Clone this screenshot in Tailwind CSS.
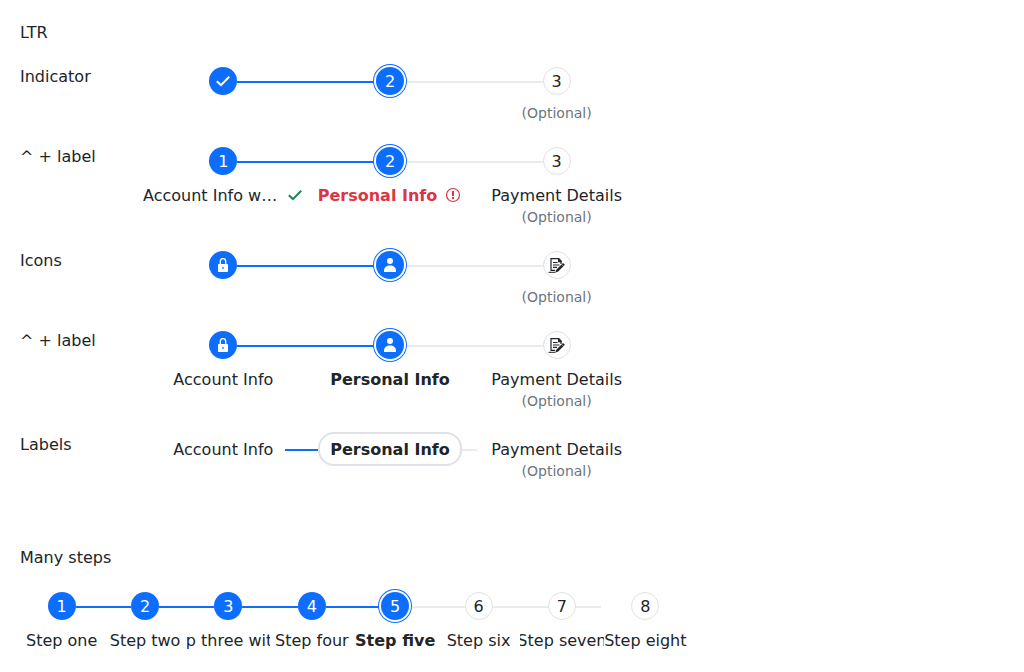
<!DOCTYPE html>
<html lang="en">
<head>
<meta charset="utf-8">
<meta name="viewport" content="width=device-width, initial-scale=1">
<title>Steps</title>
<script src="https://cdn.jsdelivr.net/npm/@tailwindcss/browser@4"></script>
</head>
<body class="bg-white p-5 font-['DejaVu_Sans',sans-serif] text-base leading-[25px] text-[#212529]">

<svg class="hidden" aria-hidden="true">
  <symbol id="check" viewBox="0 0 16 16"><path d="M1.800 8.200 6 12.100 14.200 3.700" fill="none" stroke="currentColor" stroke-width="2"/></symbol>
  <symbol id="alert" viewBox="0 0 16 16"><circle cx="8" cy="8" r="6.500" fill="none" stroke="currentColor" stroke-width="1.200"/><path d="M7 4h2v5H7zM7 10h2v2H7z"/></symbol>
  <symbol id="lock" viewBox="0 0 16 16"><path d="M5.300 7V4.400a2.700 2.700 0 0 1 5.400 0V7" fill="none" stroke="currentColor" stroke-width="1.300"/><path fill-rule="evenodd" d="M3.800 7h8.400a.8.8 0 0 1 .8.800v6.400a.8.8 0 0 1-.8.800H3.800a.8.8 0 0 1-.8-.800V7.800a.8.8 0 0 1 .8-.8zm3.600 2.700v2.200h1.200V9.700z"/></symbol>
  <symbol id="person" viewBox="0 0 16 16"><circle cx="8" cy="4" r="3"/><path d="M2 15v-1.500C2 10.500 4.500 8.500 8 8.500s6 2 6 5V15z"/></symbol>
  <symbol id="form" viewBox="0 0 18 16"><path d="M3 13.300V1.600h7.500l2.500 2.700V7M2.400 13.300h4.800" fill="none" stroke="currentColor" stroke-width="1.200"/><path d="M10 1h1l2.700 3v1.300H10z"/><path d="M5 5.500h4.500M5 8h6.500M5 10.400h4" fill="none" stroke="currentColor" stroke-width="1.200"/><path d="M.500 15.300h7" fill="none" stroke="currentColor" stroke-width="1"/><path d="m15 6 1.900 1.800-6.700 6.700-2.800.9.900-2.700z"/><path d="m13.400 7.200 2.300 2.300" stroke="#fff" stroke-width=".5"/></symbol>
</svg>

<main>
  <h1>LTR</h1>

  <section class="mt-[19px] flex">
    <h2 class="w-30 shrink-0">Indicator</h2>
    <ol class="grid w-full max-w-[500px] grid-cols-3">
      <li>
        <div class="flex h-[34px] items-center">
          <span class="mt-0.5 h-0.5 flex-1"></span>
          <span class="grid size-7 place-items-center rounded-full bg-[#0d6efd] text-white"><svg class="size-4" fill="currentColor" role="img" aria-label="Done"><use href="#check"/></svg></span>
          <span class="mt-0.5 h-0.5 flex-1 bg-[#0d6efd]"></span>
        </div>
      </li>
      <li aria-current="step">
        <div class="flex h-[34px] items-center">
          <span class="mt-0.5 h-0.5 flex-1 bg-[#0d6efd]"></span>
          <span class="z-10 grid size-7 place-items-center rounded-full bg-[#0d6efd] pt-0.5 leading-6 text-white shadow-[0_0_0_2px_#fff,0_0_0_3px_#0d6efd]">2</span>
          <span class="mt-0.5 h-0.5 flex-1 bg-[#e9ecef]"></span>
        </div>
      </li>
      <li>
        <div class="flex h-[34px] items-center">
          <span class="mt-0.5 h-0.5 flex-1 bg-[#e9ecef]"></span>
          <span class="grid size-7 place-items-center rounded-full border border-[#dee2e6] pt-0.5 leading-6">3</span>
          <span class="mt-0.5 h-0.5 flex-1"></span>
        </div>
        <p class="mt-[5px] text-center text-sm leading-[21px] text-[#6c757d]">(Optional)</p>
      </li>
    </ol>
  </section>

  <section class="mt-5 flex">
    <h2 class="w-30 shrink-0">^ + label</h2>
    <ol class="grid w-full max-w-[500px] grid-cols-3">
      <li class="min-w-0">
        <div class="flex h-[34px] items-center">
          <span class="mt-0.5 h-0.5 flex-1"></span>
          <span class="grid size-7 place-items-center rounded-full bg-[#0d6efd] pt-0.5 leading-6 text-white">1</span>
          <span class="mt-0.5 h-0.5 flex-1 bg-[#0d6efd]"></span>
        </div>
        <div class="mt-[5px] flex items-center justify-center gap-2 pr-1 pl-[3px]">
          <span class="truncate">Account Info with long label</span>
          <svg class="mb-px size-4 shrink-0 text-[#198754]" fill="currentColor" role="img" aria-label="Valid"><use href="#check"/></svg>
        </div>
      </li>
      <li class="min-w-0" aria-current="step">
        <div class="flex h-[34px] items-center">
          <span class="mt-0.5 h-0.5 flex-1 bg-[#0d6efd]"></span>
          <span class="z-10 grid size-7 place-items-center rounded-full bg-[#0d6efd] pt-0.5 leading-6 text-white shadow-[0_0_0_2px_#fff,0_0_0_3px_#0d6efd]">2</span>
          <span class="mt-0.5 h-0.5 flex-1 bg-[#e9ecef]"></span>
        </div>
        <div class="mt-[5px] flex items-center justify-center gap-2 pr-1 pl-[3px] font-bold text-[#dc3545]">
          <span class="truncate">Personal Info</span>
          <svg class="mb-px size-4 shrink-0" fill="currentColor" role="img" aria-label="Error"><use href="#alert"/></svg>
        </div>
      </li>
      <li class="min-w-0">
        <div class="flex h-[34px] items-center">
          <span class="mt-0.5 h-0.5 flex-1 bg-[#e9ecef]"></span>
          <span class="grid size-7 place-items-center rounded-full border border-[#dee2e6] pt-0.5 leading-6">3</span>
          <span class="mt-0.5 h-0.5 flex-1"></span>
        </div>
        <div class="mt-[5px] truncate text-center">Payment Details</div>
        <p class="-mt-px text-center text-sm leading-[21px] text-[#6c757d]">(Optional)</p>
      </li>
    </ol>
  </section>

  <section class="mt-5 flex">
    <h2 class="w-30 shrink-0">Icons</h2>
    <ol class="grid w-full max-w-[500px] grid-cols-3">
      <li>
        <div class="flex h-[34px] items-center">
          <span class="mt-0.5 h-0.5 flex-1"></span>
          <span class="grid size-7 place-items-center rounded-full bg-[#0d6efd] text-white"><svg class="size-4" fill="currentColor" role="img" aria-label="Account Info"><use href="#lock"/></svg></span>
          <span class="mt-0.5 h-0.5 flex-1 bg-[#0d6efd]"></span>
        </div>
      </li>
      <li aria-current="step">
        <div class="flex h-[34px] items-center">
          <span class="mt-0.5 h-0.5 flex-1 bg-[#0d6efd]"></span>
          <span class="z-10 grid size-7 place-items-center rounded-full bg-[#0d6efd] text-white shadow-[0_0_0_2px_#fff,0_0_0_3px_#0d6efd]"><svg class="size-4" fill="currentColor" role="img" aria-label="Personal Info"><use href="#person"/></svg></span>
          <span class="mt-0.5 h-0.5 flex-1 bg-[#e9ecef]"></span>
        </div>
      </li>
      <li>
        <div class="flex h-[34px] items-center">
          <span class="mt-0.5 h-0.5 flex-1 bg-[#e9ecef]"></span>
          <span class="grid size-7 place-items-center rounded-full border border-[#dee2e6]"><svg class="h-4 w-[18px]" fill="currentColor" role="img" aria-label="Payment Details"><use href="#form"/></svg></span>
          <span class="mt-0.5 h-0.5 flex-1"></span>
        </div>
        <p class="mt-[5px] text-center text-sm leading-[21px] text-[#6c757d]">(Optional)</p>
      </li>
    </ol>
  </section>

  <section class="mt-5 flex">
    <h2 class="w-30 shrink-0">^ + label</h2>
    <ol class="grid w-full max-w-[500px] grid-cols-3">
      <li class="min-w-0">
        <div class="flex h-[34px] items-center">
          <span class="mt-0.5 h-0.5 flex-1"></span>
          <span class="grid size-7 place-items-center rounded-full bg-[#0d6efd] text-white"><svg class="size-4" fill="currentColor" aria-hidden="true"><use href="#lock"/></svg></span>
          <span class="mt-0.5 h-0.5 flex-1 bg-[#0d6efd]"></span>
        </div>
        <div class="mt-[5px] truncate text-center">Account Info</div>
      </li>
      <li class="min-w-0" aria-current="step">
        <div class="flex h-[34px] items-center">
          <span class="mt-0.5 h-0.5 flex-1 bg-[#0d6efd]"></span>
          <span class="z-10 grid size-7 place-items-center rounded-full bg-[#0d6efd] text-white shadow-[0_0_0_2px_#fff,0_0_0_3px_#0d6efd]"><svg class="size-4" fill="currentColor" aria-hidden="true"><use href="#person"/></svg></span>
          <span class="mt-0.5 h-0.5 flex-1 bg-[#e9ecef]"></span>
        </div>
        <div class="mt-[5px] truncate text-center font-bold">Personal Info</div>
      </li>
      <li class="min-w-0">
        <div class="flex h-[34px] items-center">
          <span class="mt-0.5 h-0.5 flex-1 bg-[#e9ecef]"></span>
          <span class="grid size-7 place-items-center rounded-full border border-[#dee2e6]"><svg class="h-4 w-[18px]" fill="currentColor" aria-hidden="true"><use href="#form"/></svg></span>
          <span class="mt-0.5 h-0.5 flex-1"></span>
        </div>
        <div class="mt-[5px] truncate text-center">Payment Details</div>
        <p class="-mt-px text-center text-sm leading-[21px] text-[#6c757d]">(Optional)</p>
      </li>
    </ol>
  </section>

  <section class="mt-5 flex">
    <h2 class="w-30 shrink-0">Labels</h2>
    <ol class="grid w-full max-w-[500px] grid-cols-3">
      <li class="min-w-0">
        <div class="flex h-[34px] items-center">
          <span class="mt-0.5 h-0.5 flex-1"></span>
          <span class="px-3 pt-px">Account Info</span>
          <span class="mt-0.5 h-0.5 flex-1 bg-[#0d6efd]"></span>
        </div>
      </li>
      <li class="min-w-0" aria-current="step">
        <div class="flex h-[34px] items-center">
          <span class="mt-0.5 h-0.5 flex-1 bg-[#0d6efd]"></span>
          <span class="rounded-2xl border-2 border-[#dee2e6] px-2.5 pt-[3px] pb-0.5 font-bold">Personal Info</span>
          <span class="mt-0.5 h-0.5 flex-1 bg-[#e9ecef]"></span>
        </div>
      </li>
      <li class="min-w-0">
        <div class="flex h-[34px] items-center">
          <span class="mt-0.5 h-0.5 flex-1 bg-[#e9ecef]"></span>
          <span class="px-3.5 pt-px">Payment Details</span>
          <span class="mt-0.5 h-0.5 flex-1"></span>
        </div>
        <p class="-mt-[5px] text-center text-sm leading-[21px] text-[#6c757d]">(Optional)</p>
      </li>
    </ol>
  </section>

  <section class="mt-[63px]">
    <h2>Many steps</h2>
    <ol class="mt-[19px] grid w-full max-w-[667px] grid-cols-8">
      <li class="min-w-0">
        <div class="flex h-[34px] items-center">
          <span class="mt-0.5 h-0.5 flex-1"></span>
          <span class="grid size-7 place-items-center rounded-full bg-[#0d6efd] pt-0.5 leading-6 text-white">1</span>
          <span class="mt-0.5 h-0.5 flex-1 bg-[#0d6efd]"></span>
        </div>
        <div class="mt-[5px] flex justify-center overflow-hidden whitespace-nowrap">Step one</div>
      </li>
      <li class="min-w-0">
        <div class="flex h-[34px] items-center">
          <span class="mt-0.5 h-0.5 flex-1 bg-[#0d6efd]"></span>
          <span class="grid size-7 place-items-center rounded-full bg-[#0d6efd] pt-0.5 leading-6 text-white">2</span>
          <span class="mt-0.5 h-0.5 flex-1 bg-[#0d6efd]"></span>
        </div>
        <div class="mt-[5px] flex justify-center overflow-hidden whitespace-nowrap">Step two</div>
      </li>
      <li class="min-w-0">
        <div class="flex h-[34px] items-center">
          <span class="mt-0.5 h-0.5 flex-1 bg-[#0d6efd]"></span>
          <span class="grid size-7 place-items-center rounded-full bg-[#0d6efd] pt-0.5 leading-6 text-white">3</span>
          <span class="mt-0.5 h-0.5 flex-1 bg-[#0d6efd]"></span>
        </div>
        <div class="mt-[5px] flex justify-center overflow-hidden whitespace-nowrap">Step three with a</div>
      </li>
      <li class="min-w-0">
        <div class="flex h-[34px] items-center">
          <span class="mt-0.5 h-0.5 flex-1 bg-[#0d6efd]"></span>
          <span class="grid size-7 place-items-center rounded-full bg-[#0d6efd] pt-0.5 leading-6 text-white">4</span>
          <span class="mt-0.5 h-0.5 flex-1 bg-[#0d6efd]"></span>
        </div>
        <div class="mt-[5px] flex justify-center overflow-hidden whitespace-nowrap">Step four</div>
      </li>
      <li class="min-w-0" aria-current="step">
        <div class="flex h-[34px] items-center">
          <span class="mt-0.5 h-0.5 flex-1 bg-[#0d6efd]"></span>
          <span class="z-10 grid size-7 place-items-center rounded-full bg-[#0d6efd] pt-0.5 leading-6 text-white shadow-[0_0_0_2px_#fff,0_0_0_3px_#0d6efd]">5</span>
          <span class="mt-0.5 h-0.5 flex-1 bg-[#e9ecef]"></span>
        </div>
        <div class="mt-[5px] flex justify-center overflow-hidden font-bold whitespace-nowrap">Step five</div>
      </li>
      <li class="min-w-0">
        <div class="flex h-[34px] items-center">
          <span class="mt-0.5 h-0.5 flex-1 bg-[#e9ecef]"></span>
          <span class="grid size-7 place-items-center rounded-full border border-[#dee2e6] pt-0.5 leading-6">6</span>
          <span class="mt-0.5 h-0.5 flex-1 bg-[#e9ecef]"></span>
        </div>
        <div class="mt-[5px] flex justify-center overflow-hidden whitespace-nowrap">Step six</div>
      </li>
      <li class="min-w-0">
        <div class="flex h-[34px] items-center">
          <span class="mt-0.5 h-0.5 flex-1 bg-[#e9ecef]"></span>
          <span class="grid size-7 place-items-center rounded-full border border-[#dee2e6] pt-0.5 leading-6">7</span>
          <span class="mt-0.5 flex-1"><span class="mr-[3px] block h-0.5 bg-[#e9ecef]"></span></span>
        </div>
        <div class="mt-[5px] flex justify-center overflow-hidden whitespace-nowrap">Step seven</div>
      </li>
      <li class="min-w-0">
        <div class="flex h-[34px] items-center justify-center">
          <span class="grid size-7 place-items-center rounded-full border border-[#dee2e6] pt-0.5 leading-6">8</span>
        </div>
        <div class="mt-[5px] flex justify-center overflow-hidden whitespace-nowrap">Step eight</div>
      </li>
    </ol>
  </section>
</main>
</body>
</html>
